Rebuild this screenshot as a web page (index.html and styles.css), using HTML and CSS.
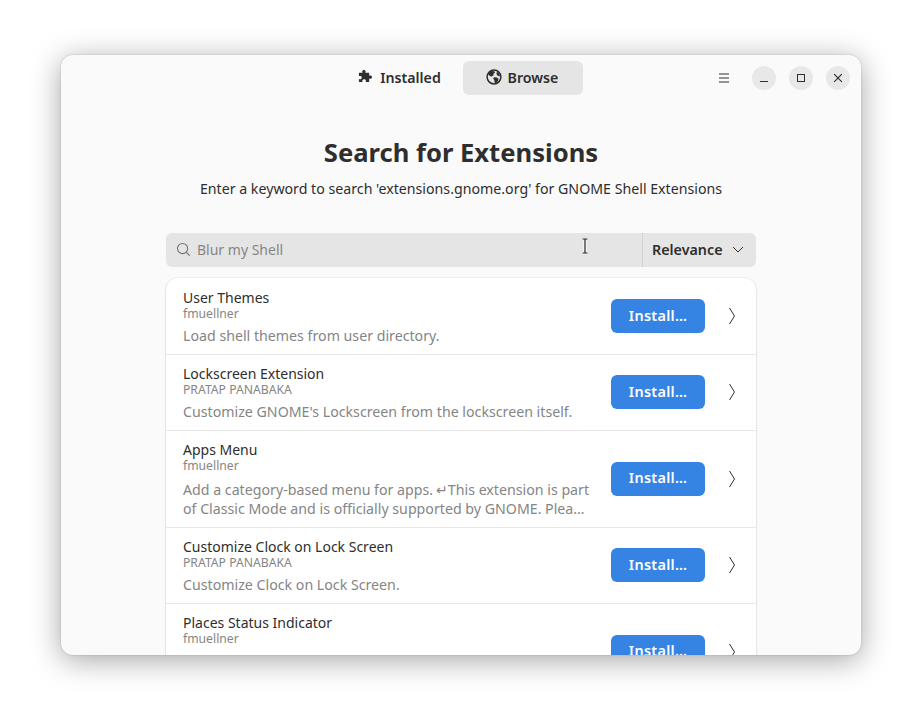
FILE: index.html
```html
<!DOCTYPE html>
<html lang="en">
<head>
<meta charset="utf-8">
<title>Extension Manager</title>
<link rel="stylesheet" href="styles.css">
</head>
<body>
<div class="window">
  <header class="headerbar">
    <nav class="tabs">
      <div class="tab tab-installed">
        <svg class="tab-icon" viewBox="0 0 16 16"><path fill="#2e2e2e" d="M6 1.2c1.1-.6 2.6.1 2.6 1.3 0 .5-.2.8-.3 1.2h3.4c.3 0 .5.2.5.5v2.6c.4-.2.8-.4 1.3-.4 1.2 0 1.9 1.3 1.3 2.5-.5 1-1.7 1.2-2.6.6v3.1c0 .3-.2.5-.5.5H8.6c.3-.5.5-1 .3-1.6-.3-1-1.6-1.4-2.6-1-1.1.4-1.3 1.7-.6 2.6H2.4c-.3 0-.5-.2-.5-.5V9.9c.6.4 1.5.5 2.2 0 .9-.6.9-2 0-2.6-.7-.5-1.6-.4-2.2 0V4.2c0-.3.2-.5.5-.5h3.2C5 2.9 5 1.8 6 1.2z"/></svg>
        <span>Installed</span>
      </div>
      <div class="tab tab-active">
        <svg class="tab-icon" viewBox="0 0 16 16"><circle cx="8" cy="8" r="6.9" fill="none" stroke="#2e2e2e" stroke-width="1.5"/><path fill="#2e2e2e" d="M3 3.4 5.4 2l3 .2.6 1.6-1.6 1 .2 1.4-2 1.4-1.8-.6L2.2 5zM8 8.2l3 .4 1.6 1.4-.6 2-2 2.2-1.2-.2-.6-3-1-1.6zM11 2.6l2.4 2.4.6 2.2-2-.2-1.6-2z"/></svg>
        <span>Browse</span>
      </div>
    </nav>
    <div class="controls">
      <svg class="menu-icon" viewBox="0 0 12 10"><path d="M1 1h10M1 5h10M1 9h10" stroke="#2e2e2e" stroke-width="1" fill="none"/></svg>
      <div class="control"><svg viewBox="0 0 10 10"><path d="M1 8.5h8" stroke="#2e2e2e" stroke-width="1"/></svg></div>
      <div class="control"><svg viewBox="0 0 10 10"><rect x="1.5" y="1.5" width="7" height="7" fill="none" stroke="#2e2e2e" stroke-width="1"/></svg></div>
      <div class="control"><svg viewBox="0 0 10 10"><path d="M1.2 1.2l7.6 7.6M8.8 1.2l-7.6 7.6" stroke="#2e2e2e" stroke-width="1.2"/></svg></div>
    </div>
  </header>

  <main class="content">
    <h1 class="title">Search for Extensions</h1>
    <p class="subtitle">Enter a keyword to search 'extensions.gnome.org' for GNOME Shell Extensions</p>

    <div class="searchbar">
      <div class="search-entry">
        <svg class="search-icon" viewBox="0 0 16 16"><circle cx="7" cy="7" r="5.4" fill="none" stroke="#6e6e6e" stroke-width="1.1"/><path d="M11 11l3.6 3.6" stroke="#6e6e6e" stroke-width="1.2"/></svg>
        <span class="placeholder">Blur my Shell</span>
        <svg class="cursor" viewBox="0 0 8 16"><path d="M1.5 1h5M4 1v14M1.5 15h5" stroke="#fff" stroke-width="3" fill="none"/><path d="M1.5 1h5M4 1v14M1.5 15h5" stroke="#222" stroke-width="1.2" fill="none"/></svg>
      </div>
      <div class="sort">
        <span>Relevance</span>
        <svg class="sort-icon" viewBox="0 0 12 7"><path d="M1 1l5 5 5-5" fill="none" stroke="#2e2e2e" stroke-width="1"/></svg>
      </div>
    </div>

    <section class="list">
      <article class="row">
        <div class="info">
          <div class="name">User Themes</div>
          <div class="author">fmuellner</div>
          <div class="desc">Load shell themes from user directory.</div>
        </div>
        <button class="install">Install…</button>
        <svg class="chevron" viewBox="0 0 6 16"><path d="M.5 0l5 8-5 8" fill="none" stroke="#2e2e2e" stroke-width="1"/></svg>
      </article>
      <article class="row">
        <div class="info">
          <div class="name">Lockscreen Extension</div>
          <div class="author">PRATAP PANABAKA</div>
          <div class="desc">Customize GNOME's Lockscreen from the lockscreen itself.</div>
        </div>
        <button class="install">Install…</button>
        <svg class="chevron" viewBox="0 0 6 16"><path d="M.5 0l5 8-5 8" fill="none" stroke="#2e2e2e" stroke-width="1"/></svg>
      </article>
      <article class="row">
        <div class="info">
          <div class="name">Apps Menu</div>
          <div class="author">fmuellner</div>
          <div class="desc desc-wrap">Add a category-based menu for apps. <span class="newline">↵</span>This extension is part<br>of Classic Mode and is officially supported by GNOME. Plea…</div>
        </div>
        <button class="install">Install…</button>
        <svg class="chevron" viewBox="0 0 6 16"><path d="M.5 0l5 8-5 8" fill="none" stroke="#2e2e2e" stroke-width="1"/></svg>
      </article>
      <article class="row">
        <div class="info">
          <div class="name">Customize Clock on Lock Screen</div>
          <div class="author">PRATAP PANABAKA</div>
          <div class="desc">Customize Clock on Lock Screen.</div>
        </div>
        <button class="install">Install…</button>
        <svg class="chevron" viewBox="0 0 6 16"><path d="M.5 0l5 8-5 8" fill="none" stroke="#2e2e2e" stroke-width="1"/></svg>
      </article>
      <article class="row row-tall">
        <div class="info info-top">
          <div class="name">Places Status Indicator</div>
          <div class="author">fmuellner</div>
        </div>
        <button class="install">Install…</button>
        <svg class="chevron" viewBox="0 0 6 16"><path d="M.5 0l5 8-5 8" fill="none" stroke="#2e2e2e" stroke-width="1"/></svg>
      </article>
    </section>
  </main>
</div>
</body>
</html>
```
FILE: styles.css
```css
* { box-sizing: border-box; }
html, body { margin: 0; height: 100%; }
body {
  background: #fff;
  padding: 55px 61px 67px;
  font-family: "Noto Sans", sans-serif;
  color: #2e2e2e;
  overflow: hidden;
}
.window {
  width: 800px;
  height: 600px;
  background: #fafafa;
  border-radius: 12px;
  overflow: hidden;
  box-shadow: 0 5px 30px rgba(0,0,0,.36), 0 0 2px rgba(0,0,0,.2);
  display: flex;
  flex-direction: column;
}
.headerbar {
  height: 46px;
  flex: none;
  padding-top: 6px;
  display: flex;
  position: relative;
  justify-content: center;
}
.tabs { display: flex; margin-left: 2px; }
.tab {
  width: 120px;
  height: 34px;
  padding-bottom: 2px;
  border-radius: 6px;
  display: flex;
  align-items: center;
  justify-content: center;
  gap: 6px;
  font-size: 14.2px;
  font-weight: 600;
}
.tab-active { background: #e5e5e5; padding-right: 2px; }
.tab-installed { margin-right: 2px; gap: 7px; padding-right: 4px; }
.tab-icon { width: 16px; height: 16px; }
.controls {
  position: absolute;
  right: 11px;
  top: 11px;
  display: flex;
  align-items: center;
  gap: 13px;
}
.menu-icon { width: 12px; height: 10px; margin-right: 9px; }
.control {
  width: 24px;
  height: 24px;
  border-radius: 50%;
  background: #e8e8e8;
  display: flex;
  align-items: center;
  justify-content: center;
}
.control svg { width: 10px; height: 10px; }
.content {
  flex: 1;
  min-height: 0;
  padding: 0 105px;
  overflow: hidden;
}
.title {
  margin: 33px 0 0;
  height: 38px;
  line-height: 38px;
  font-size: 25.6px;
  font-weight: 700;
  text-align: center;
  color: #2e2e2e;
}
.subtitle {
  margin: 6px -30px 0;
  height: 21px;
  line-height: 21px;
  font-size: 14.2px;
  text-align: center;
}
.searchbar {
  margin-top: 34px;
  height: 34px;
  display: flex;
  background: #e5e5e5;
  border-radius: 6px;
}
.search-entry {
  flex: 1;
  display: flex;
  align-items: center;
  gap: 6px;
  padding: 0 0 2px 10px;
  position: relative;
  border-right: 1px solid #d2d2d2;
}
.search-icon { width: 15px; height: 15px; }
.placeholder { font-size: 14px; color: #858585; }
.cursor {
  position: absolute;
  left: 415px;
  top: 5px;
  width: 8px;
  height: 16px;
}
.sort {
  width: 113px;
  display: flex;
  align-items: center;
  gap: 9px;
  padding: 0 0 2px 9px;
  font-size: 14.3px;
  font-weight: 600;
}
.sort-icon { width: 12px; height: 7px; }
.list {
  margin-top: 11px;
  padding-top: 1px;
  background: #fff;
  border-radius: 12px;
  box-shadow: 0 0 0 1px rgba(0,0,0,.04), 0 1px 2px rgba(0,0,0,.16);
}
.row {
  display: flex;
  align-items: center;
  padding: 0 21px 0 17px;
  border-bottom: 1px solid #e8e8e8;
  min-height: 76px;
}
.row-tall { min-height: 97px; }
.info { flex: 1; min-width: 0; padding: 10px 0 9px; }
.info-top { align-self: flex-start; }
.name { font-size: 14px; line-height: 18px; color: #2e2e2e; }
.author { font-size: 12.2px; line-height: 14px; color: #858585; }
.desc { font-size: 14.2px; line-height: 19px; color: #858585; margin-top: 5px; white-space: nowrap; }
.desc-wrap { margin-top: 7px; }
.newline { margin-left: -1px; }
.install {
  width: 94px;
  height: 34px;
  padding: 0 0 2px;
  border: 0;
  border-radius: 6px;
  background: #3584e4;
  color: #fff;
  font: 600 14.4px "Noto Sans", sans-serif;
  letter-spacing: .3px;
  margin: 0 24px 1px 0;
  flex: none;
}
.chevron { width: 6px; height: 16px; flex: none; margin-bottom: 1px; }
```
